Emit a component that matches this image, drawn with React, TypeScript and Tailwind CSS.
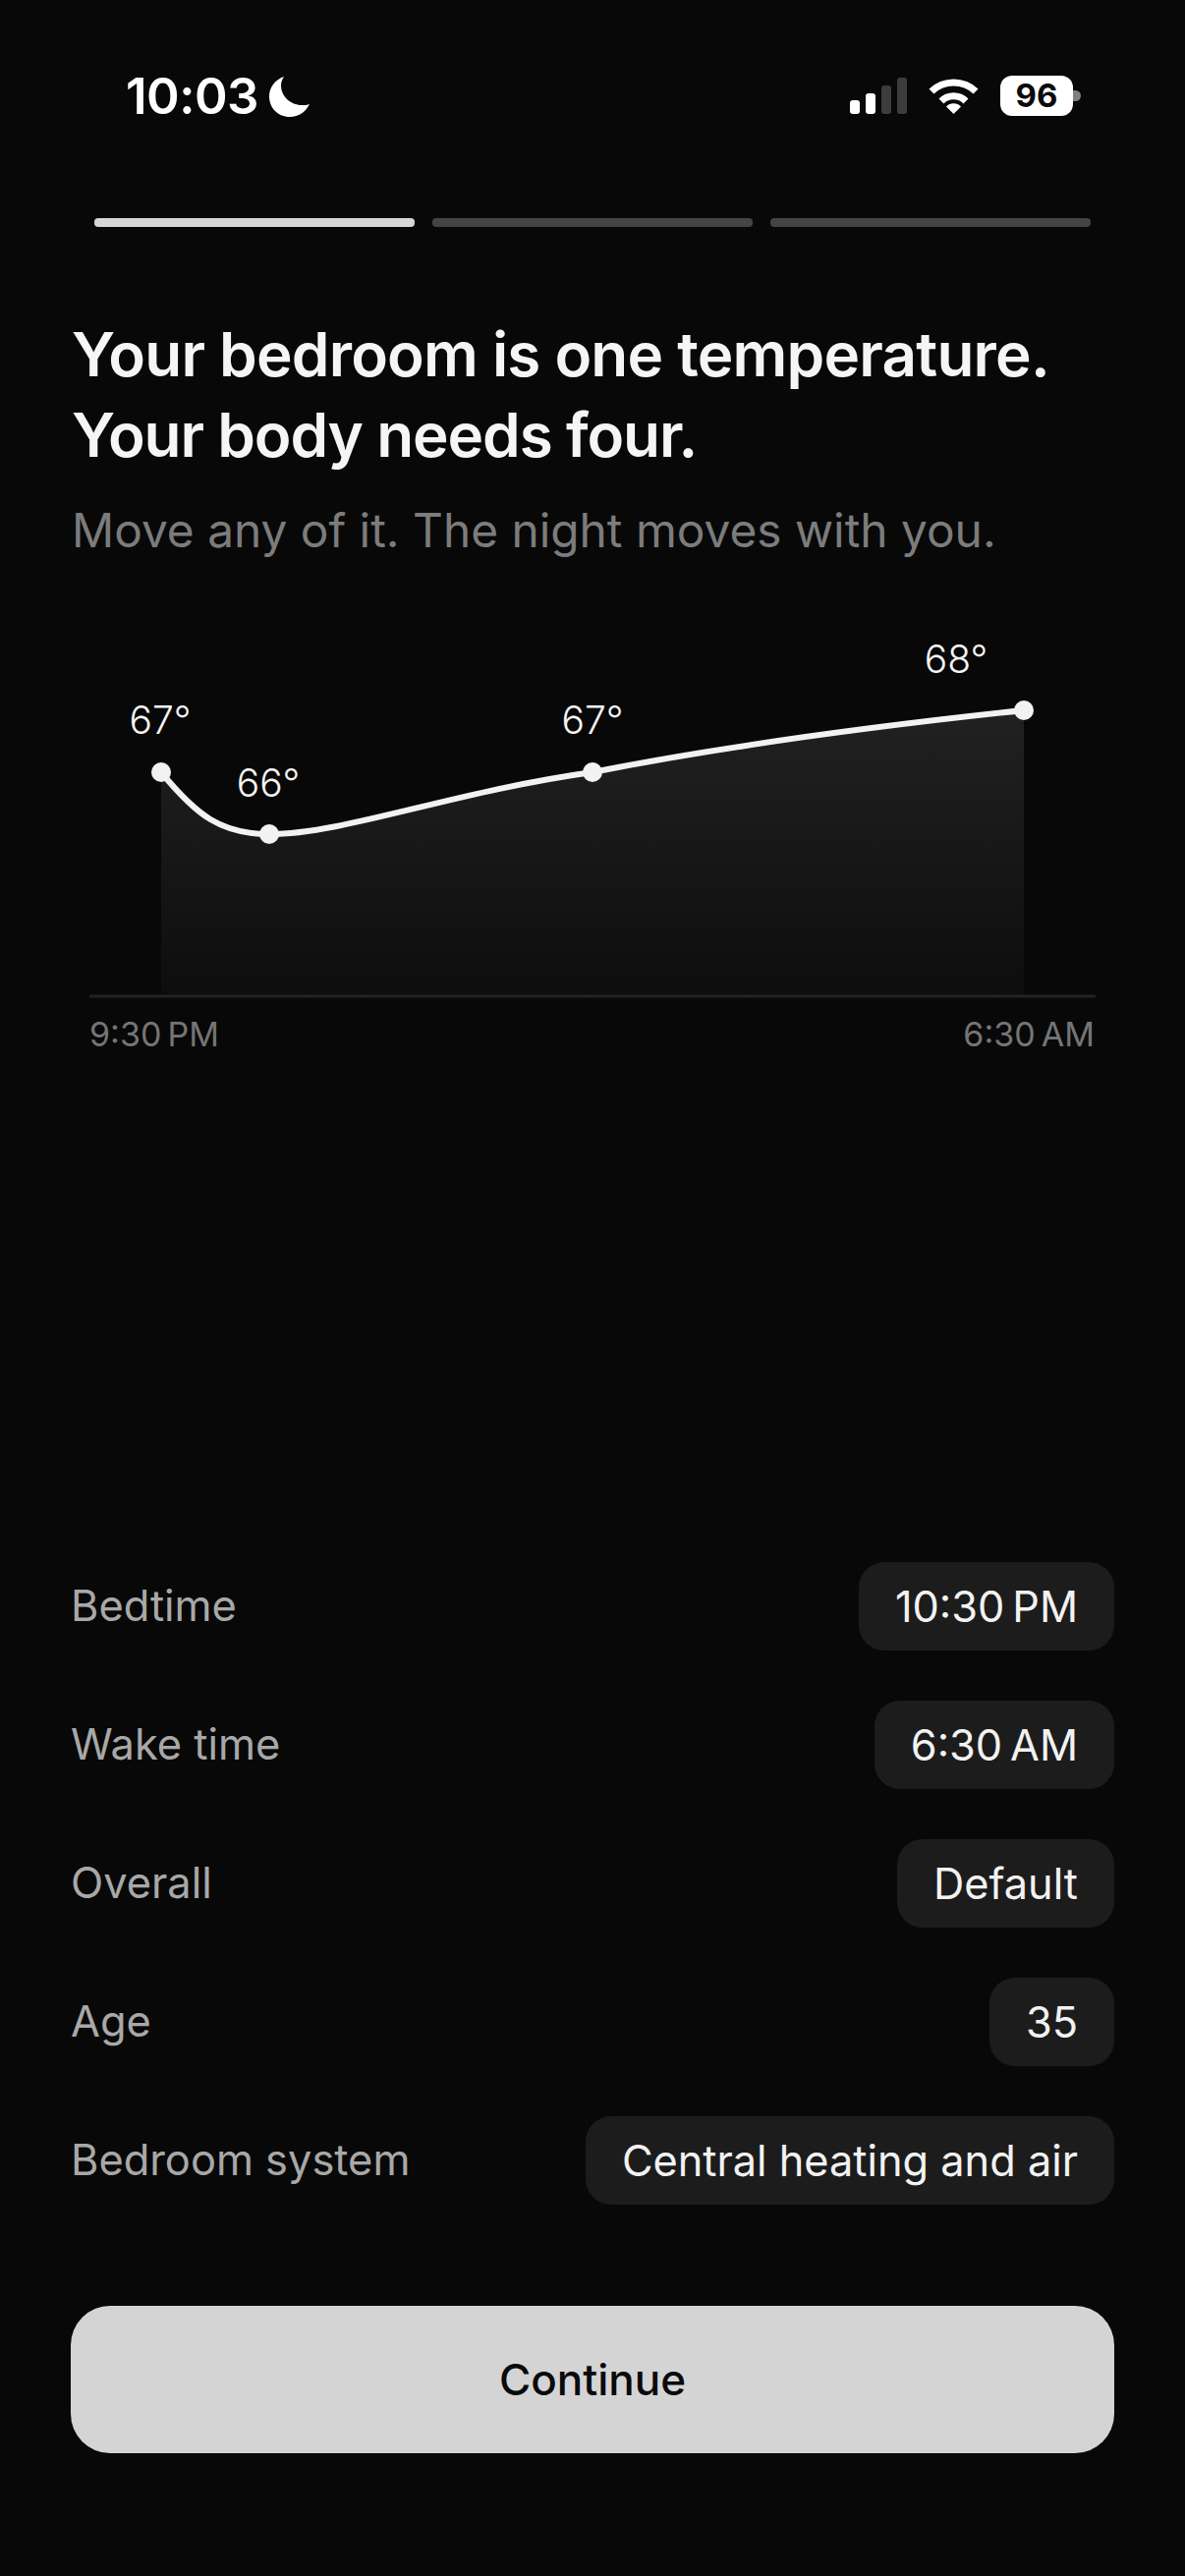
import React from 'react';

const rows = [
  { label: 'Bedtime', value: '10:30 PM' },
  { label: 'Wake time', value: '6:30 AM' },
  { label: 'Overall', value: 'Default' },
  { label: 'Age', value: '35' },
  { label: 'Bedroom system', value: 'Central heating and air' },
];

const points = [
  { x: 164, y: 786, label: '67°', labelX: 163, labelY: 732 },
  { x: 274, y: 849, label: '66°', labelX: 273, labelY: 796 },
  { x: 603, y: 786, label: '67°', labelX: 603, labelY: 732 },
  { x: 1042, y: 723, label: '68°', labelX: 973, labelY: 670 },
];

const CHART_TOP = 620;
const curve =
  'M164 786 C200 830 225 849 274 849 C350 849 460 806 603 786 C750 757 900 738 1042 723';

const StatusBar = () => (
  <header className="flex h-[118px] items-start justify-between pt-[77px] pl-[128px] pr-[106px]">
    <div className="flex items-center gap-[11px]">
      <span className="text-[51px] leading-[42px] font-semibold tracking-[-0.5px] text-white">10:03</span>
      <svg width="41" height="41" viewBox="0 0 41 41" className="fill-white">
        <path d="M15 0C6 3 0 11 0 20C0 32 9 41 21 41C30 41 37 36 41 28C39 29 36 29 33 29C22 29 12 20 12 9C12 6 13 3 15 0Z" />
      </svg>
    </div>
    <div className="flex items-end">
      <div className="mb-[2px] flex items-end gap-[6px]">
        <span className="h-[14px] w-[10px] rounded-[3px] bg-white" />
        <span className="h-[21px] w-[10px] rounded-[3px] bg-white" />
        <span className="h-[29px] w-[10px] rounded-[3px] bg-[#3d3d3d]" />
        <span className="h-[37px] w-[10px] rounded-[3px] bg-[#3d3d3d]" />
      </div>
      <svg width="51" height="37" viewBox="0 0 51 37" className="mb-[2px] ml-[22px] fill-white">
        <path d="M0.5 11.5A36 36 0 0 1 50.5 11.5L45.5 16.5A29 29 0 0 0 5.5 16.5Z" />
        <path d="M10.5 21.5A21 21 0 0 1 40.5 21.5L35.5 26.5A14 14 0 0 0 15.5 26.5Z" />
        <path d="M18 29.5A10.5 10.5 0 0 1 33 29.5L25.5 37Z" />
      </svg>
      <div className="ml-[22px] flex items-center">
        <div className="flex h-[41px] w-[74px] items-center justify-center rounded-[12px] bg-white text-[33px] leading-none font-bold text-[#0a0a0a]">
          96
        </div>
        <span className="h-[11px] w-[8px] rounded-r-[6px] bg-[#808080]" />
      </div>
    </div>
  </header>
);

const Chart = () => (
  <div className="relative h-[460px]">
    <svg width="1206" height="460" viewBox={`0 ${CHART_TOP} 1206 460`} className="block">
      <defs>
        <linearGradient id="area" gradientUnits="userSpaceOnUse" x1="0" y1="723" x2="0" y2="1014">
          <stop offset="0" stopColor="#212121" />
          <stop offset="1" stopColor="#0d0d0d" />
        </linearGradient>
      </defs>
      <path d={`${curve} L1042 1013 L164 1013 Z`} fill="url(#area)" />
      <path d="M91 1014H1115" stroke="#222222" strokeWidth="3" />
      <path d={curve} fill="none" stroke="#f2f2f2" strokeWidth="6" />
      {points.map((p) => (
        <circle key={p.x} cx={p.x} cy={p.y} r="10" fill="#f2f2f2" />
      ))}
    </svg>
    {points.map((p) => (
      <span
        key={p.x}
        className="absolute -translate-x-1/2 -translate-y-1/2 text-[39px] leading-none font-light text-[#f5f5f5]"
        style={{ left: p.labelX, top: p.labelY - CHART_TOP }}
      >
        {p.label}
      </span>
    ))}
    <div className="absolute top-[411px] right-[92px] left-[91px] flex justify-between text-[34px] leading-[44px] text-[#757575] [word-spacing:-0.1em]">
      <span>9:30 PM</span>
      <span>6:30 AM</span>
    </div>
  </div>
);

export default function App() {
  return (
    <div className="flex h-[2622px] w-[1206px] flex-col overflow-hidden bg-[#080808] font-['Inter',sans-serif]">
      <StatusBar />
      <div className="mt-[104px] flex gap-[18px] px-[96px]">
        <span className="h-[9px] flex-1 rounded-[4px] bg-[#d6d6d6]" />
        <span className="h-[9px] flex-1 rounded-[4px] bg-[#444444]" />
        <span className="h-[9px] flex-1 rounded-[4px] bg-[#444444]" />
      </div>
      <h1 className="mt-[89px] px-[73px] text-[62px] leading-[82px] font-semibold tracking-[-0.8px] text-[#f5f5f5]">
        Your bedroom is one temperature.
        <br />
        <span className="tracking-[-1.15px]">Your body needs four.</span>
      </h1>
      <p className="mt-[24px] px-[73px] text-[47.8px] leading-[64px] text-[#7c7c7c]">
        Move any of it. The night moves with you.
      </p>
      <div className="mt-[48px]">
        <Chart />
      </div>
      <div className="flex flex-1 flex-col justify-end gap-[51px] px-[72px]">
        {rows.map((row) => (
          <div key={row.label} className="flex items-center justify-between">
            <span className="text-[43.4px] text-[#a8a8a8]">{row.label}</span>
            <span
              className={
                row.value.includes(':')
                  ? 'flex h-[90px] items-center rounded-[26px] bg-[#1c1c1c] px-[37px] text-[43.3px] text-[#f2f2f2] [word-spacing:-0.1em]'
                  : 'flex h-[90px] items-center rounded-[26px] bg-[#1c1c1c] px-[37px] text-[43.3px] text-[#f2f2f2]'
              }
            >
              {row.value}
            </span>
          </div>
        ))}
      </div>
      <button className="mx-[72px] mt-[103px] mb-[125px] h-[150px] shrink-0 rounded-[40px] bg-[#d4d4d4] text-[44px] font-medium text-[#0a0a0a]">
        Continue
      </button>
    </div>
  );
}
